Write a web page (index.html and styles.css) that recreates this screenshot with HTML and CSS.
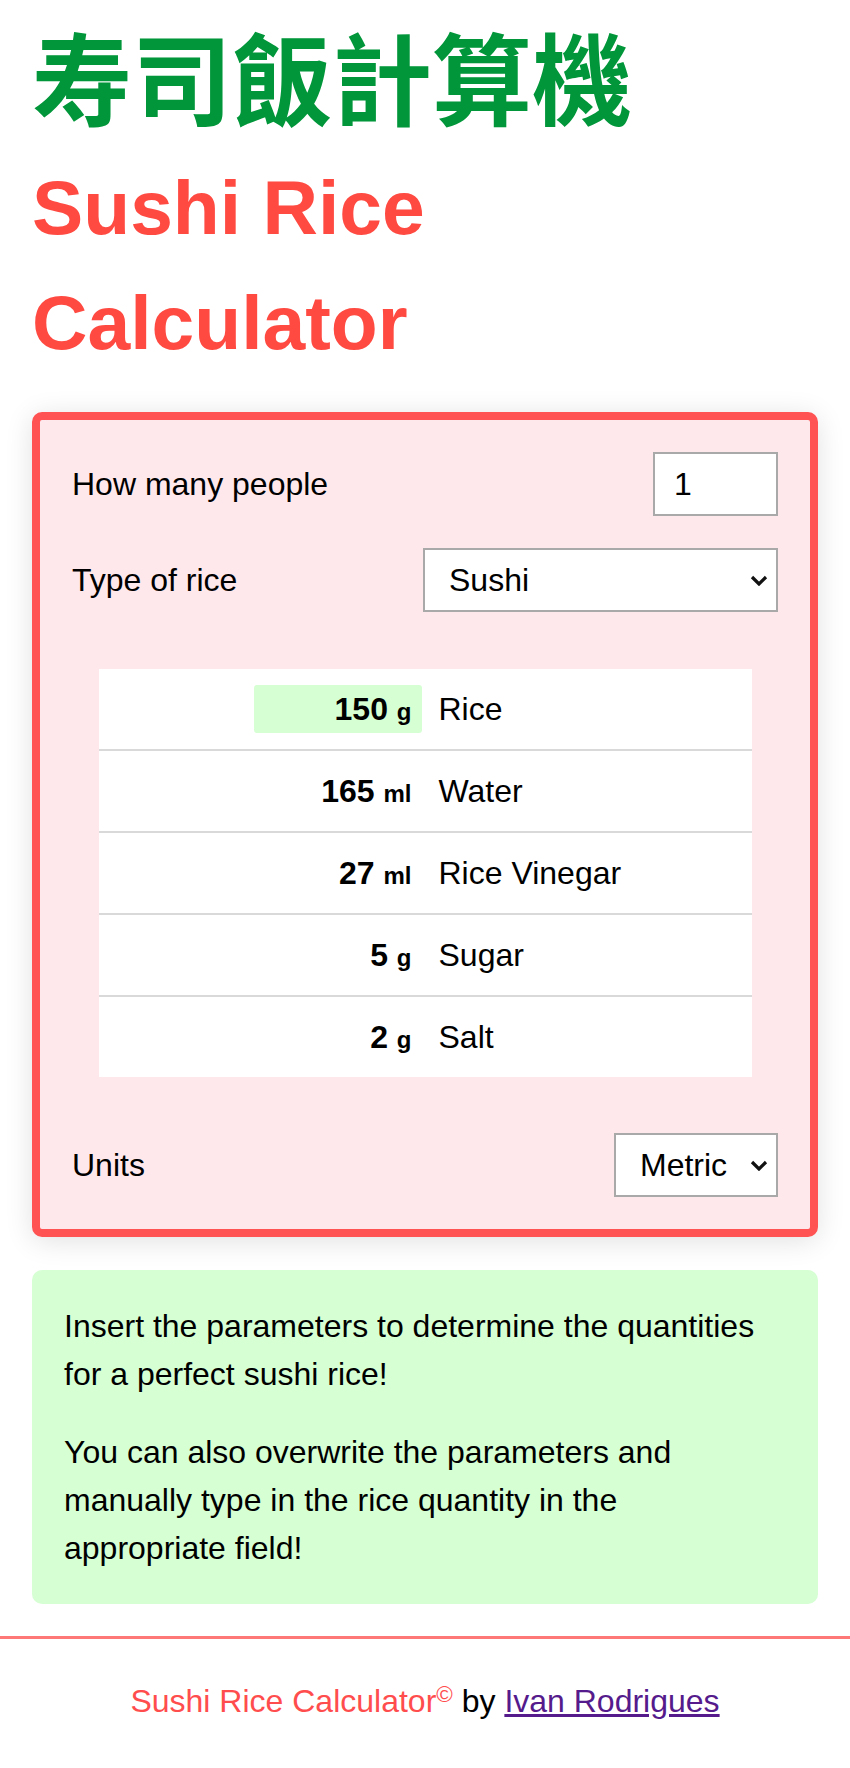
FILE: index.html
```html
<!DOCTYPE html>
<html lang="en">
<head>
<meta charset="utf-8">
<title>Sushi Rice Calculator</title>
<link rel="stylesheet" href="styles.css">
</head>
<body>
<main class="page">
  <h1 class="title-cjk" lang="zh-Hant">寿司飯計算機</h1>
  <h2 class="title">Sushi Rice Calculator</h2>

  <section class="card">
    <div class="row">
      <label class="label" for="people">How many people</label>
      <input class="field field-people" id="people" type="text" value="1">
    </div>
    <div class="row">
      <label class="label" for="rice">Type of rice</label>
      <div class="select-wrap select-rice">
        <select class="field select" id="rice">
          <option>Sushi</option>
        </select>
        <svg class="chevron" width="18" height="11" viewBox="0 0 18 11"><path d="M2 2 L9 9 L16 2" fill="none" stroke="#111" stroke-width="3.2"/></svg>
      </div>
    </div>

    <table class="recipe">
      <tr>
        <td class="amt"><div class="qty qty-field"><b class="num">150</b> <b class="unit">g</b></div></td>
        <td class="name">Rice</td>
      </tr>
      <tr>
        <td class="amt"><div class="qty"><b class="num">165</b> <b class="unit">ml</b></div></td>
        <td class="name">Water</td>
      </tr>
      <tr>
        <td class="amt"><div class="qty"><b class="num">27</b> <b class="unit">ml</b></div></td>
        <td class="name">Rice Vinegar</td>
      </tr>
      <tr>
        <td class="amt"><div class="qty"><b class="num">5</b> <b class="unit">g</b></div></td>
        <td class="name">Sugar</td>
      </tr>
      <tr>
        <td class="amt"><div class="qty"><b class="num">2</b> <b class="unit">g</b></div></td>
        <td class="name">Salt</td>
      </tr>
    </table>

    <div class="row">
      <label class="label" for="units">Units</label>
      <div class="select-wrap select-units">
        <select class="field select" id="units">
          <option>Metric</option>
        </select>
        <svg class="chevron" width="18" height="11" viewBox="0 0 18 11"><path d="M2 2 L9 9 L16 2" fill="none" stroke="#111" stroke-width="3.2"/></svg>
      </div>
    </div>
  </section>

  <section class="info">
    <p>Insert the parameters to determine the quantities for a perfect sushi rice!</p>
    <p>You can also overwrite the parameters and manually type in the rice quantity in the appropriate field!</p>
  </section>
</main>
<footer class="footer">
  <span class="brand">Sushi Rice Calculator<sup class="copy">©</sup></span> by <a class="author" href="#">Ivan Rodrigues</a>
</footer>
</body>
</html>
```

FILE: styles.css
```css
html, body {
  margin: 0;
  padding: 0;
  background: #ffffff;
}

body {
  font-family: "Liberation Sans", Arial, sans-serif;
  font-size: 32px;
  color: #000;
}

.page {
  padding: 0 32px;
}

.title-cjk {
  margin: 0;
  font-family: "Noto Sans CJK TC", "Noto Sans CJK JP", sans-serif;
  font-size: 100px;
  line-height: 1.5;
  font-weight: 700;
  color: #009639;
}

.title {
  margin: 0;
  font-size: 76.8px;
  line-height: 1.5;
  font-weight: 700;
  color: #ff4a42;
}

.card {
  margin-top: 32px;
  border: 8px solid #ff5252;
  border-radius: 10px;
  background: #ffe8ec;
  padding: 32px;
  box-shadow: 0 4px 28px rgba(0, 0, 0, 0.12);
}

.row {
  display: flex;
  align-items: center;
  justify-content: space-between;
  height: 64px;
}

.row + .row {
  margin-top: 32px;
}

.label {
  font-size: 32px;
}

.field {
  box-sizing: border-box;
  height: 64px;
  border: 2px solid #a9a9a9;
  border-radius: 0;
  background: #fff;
  font-family: "Liberation Sans", Arial, sans-serif;
  font-size: 32px;
  color: #000;
  margin: 0;
  outline: none;
}

.field-people {
  width: 125px;
  padding: 0 0 0 19px;
}

.select-wrap {
  position: relative;
  display: flex;
}

.select {
  -webkit-appearance: none;
  appearance: none;
  width: 100%;
  padding: 0 0 0 24px;
}

.select-rice {
  width: 355px;
}

.select-units {
  width: 164px;
}

.chevron {
  position: absolute;
  right: 10px;
  top: 27px;
  pointer-events: none;
}

.recipe {
  width: 653px;
  margin: 57px auto 56px;
  border-collapse: collapse;
  background: #fff;
}

.recipe tr + tr td {
  border-top: 2px solid #d9d9d9;
}

.amt {
  width: 323px;
  padding: 16px 0;
  text-align: right;
}

.qty {
  height: 48px;
  line-height: 48px;
  padding-right: 10px;
  white-space: nowrap;
}

.qty-field {
  width: 168px;
  box-sizing: border-box;
  margin-left: auto;
  background: #d6ffd4;
  border-radius: 3px;
}

.num {
  font-size: 32px;
  font-weight: 700;
}

.unit {
  font-size: 24px;
  font-weight: 700;
}

.name {
  padding: 16px 0 16px 17px;
  line-height: 48px;
  text-align: left;
}

.info {
  margin-top: 33px;
  background: #d6ffd4;
  border-radius: 10px;
  padding: 32px;
  line-height: 48px;
}

.info p {
  margin: 0;
}

.info p + p {
  margin-top: 30px;
}

.footer {
  margin-top: 32px;
  border-top: 3px solid #ff7878;
  padding: 38px 0 40px;
  text-align: center;
  line-height: 48px;
  font-size: 32px;
}

.brand {
  color: #ff4d4d;
}

.copy {
  font-size: 0.7em;
  line-height: 0;
  vertical-align: 0.45em;
}

.author {
  color: #551a8b;
  text-decoration: underline;
}
```
